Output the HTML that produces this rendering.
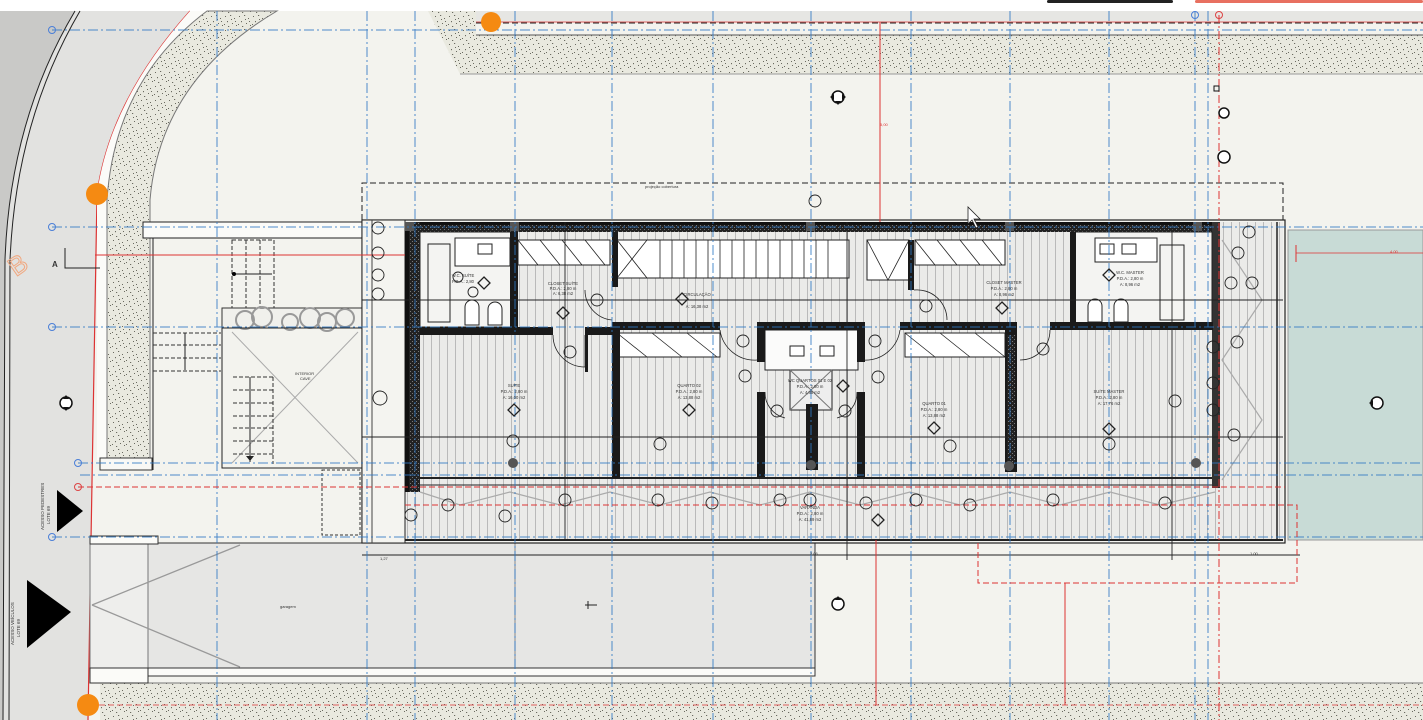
<!DOCTYPE html>
<html><head><meta charset="utf-8"><style>
html,body{margin:0;padding:0;background:#f3f3ee;overflow:hidden}
svg{display:block}
text{font-family:"Liberation Sans",sans-serif}
</style></head><body>
<svg width="1423" height="720" viewBox="0 0 1423 720" xmlns="http://www.w3.org/2000/svg">
<defs>
<pattern id="st" width="14" height="14" patternUnits="userSpaceOnUse">
<rect width="14" height="14" fill="#e9e9df"/>
<g fill="#6a6a60"><rect x="1" y="2" width="1" height="1"/><rect x="6" y="1" width="1.2" height="1"/><rect x="10" y="4" width="1" height="1"/><rect x="3" y="7" width="1" height="1.2"/><rect x="8" y="9" width="1" height="1"/><rect x="12" y="11" width="1" height="1"/><rect x="4" y="12" width="1.2" height="1"/><rect x="0" y="10" width="1" height="1"/><rect x="11" y="7" width="1" height="1"/><rect x="7" y="5" width="1" height="1"/></g>
</pattern>
<pattern id="fl" width="8" height="10" patternUnits="userSpaceOnUse">
<rect width="8" height="10" fill="#ebebe9"/><rect x="7" width="1" height="10" fill="#bababa"/>
</pattern>
<pattern id="hw" width="4" height="4" patternUnits="userSpaceOnUse">
<rect width="4" height="4" fill="#222"/><rect x="0" y="1" width="1" height="1" fill="#777"/><rect x="2" y="3" width="1" height="1" fill="#777"/>
</pattern>
</defs>

<rect x="0" y="0" width="1423" height="11" fill="#fff"/>
<rect x="1047" y="0" width="126" height="3" rx="1.5" fill="#222"/>
<rect x="1195" y="0" width="228" height="3" rx="1.5" fill="#e87060"/>
<rect x="476" y="11" width="947" height="11" fill="#e6e6e3"/>

<path d="M0,11 L190,11 Q110,100 97,194 L91,540 L88,720 L0,720 Z" fill="#e2e2e0"/>
<path d="M0,11 L75,11 Q10,120 5,260 L3,720 L0,720 Z" fill="#c9c9c7"/>
<path d="M75,11 Q10,120 5,260 L3,720" fill="none" stroke="#222" stroke-width="1"/>
<path d="M80,11 Q16,120 10,260 L9,720" fill="none" stroke="#222" stroke-width="1"/>
<path d="M190,11 Q110,100 97,194 L91,540 L88,720" fill="none" stroke="#d33" stroke-width="1.2"/>
<path d="M190,11 L207,11 Q115,80 107,200 L107,460 L97,460 L97,194 Q110,100 190,11 Z" fill="#fbfbf8"/>
<path d="M207,11 L277,11 Q160,80 150,200 L150,462 L107,462 L107,200 Q115,80 207,11 Z" fill="url(#st)" stroke="#777" stroke-width="1"/>
<rect x="100" y="458" width="52" height="12" fill="#f8f8f5" stroke="#333"/>
<path d="M428,11 L1423,11 L1423,74 L460,74 Z" fill="url(#st)"/>
<rect x="476" y="11" width="947" height="24" fill="#f3f3ee"/>
<rect x="476" y="11" width="947" height="11" fill="#e6e6e3"/>
<line x1="476" y1="35" x2="1423" y2="35" stroke="#555"/>
<line x1="460" y1="74" x2="1423" y2="74" stroke="#999"/>
<line x1="476" y1="23" x2="1423" y2="23" stroke="#222" stroke-dasharray="6 3"/>
<line x1="476" y1="22" x2="1423" y2="22" stroke="#d33" stroke-width="0.8"/>
<rect x="100" y="683" width="1323" height="37" fill="url(#st)"/>
<line x1="100" y1="683" x2="1423" y2="683" stroke="#777"/>
<line x1="90" y1="705" x2="1423" y2="705" stroke="#d33" stroke-dasharray="6 3" stroke-width="0.8"/>

<rect x="90" y="543" width="725" height="125" fill="#e6e6e4" stroke="#333"/>
<rect x="90" y="543" width="58" height="125" fill="#eeeeec" stroke="#777"/>
<rect x="90" y="668" width="58" height="15" fill="#fbfbf8" stroke="#333"/>
<rect x="148" y="668" width="667" height="8" fill="#fbfbf8" stroke="#333"/>
<path d="M92,605 L240,545 M92,605 L240,667" stroke="#999" stroke-width="1.3"/>
<line x1="515" y1="543" x2="515" y2="668" stroke="#888"/>
<rect x="90" y="536" width="68" height="8" fill="#fbfbf8" stroke="#333"/>
<text x="280" y="608" font-size="4" fill="#333">garagem</text>
<path d="M585,605 h12 M588,601 v8" stroke="#222"/>

<rect x="143" y="222" width="220" height="16" fill="#fbfbf8" stroke="#222"/>
<line x1="153" y1="238" x2="153" y2="470" stroke="#222"/>
<rect x="232" y="240" width="42" height="68" fill="none" stroke="#333" stroke-dasharray="4 2"/>
<path d="M246,240 v68 M260,240 v68" stroke="#333" stroke-dasharray="4 2"/>
<path d="M232,274 h40" stroke="#222"/><circle cx="234" cy="274" r="2"/>
<rect x="222" y="308" width="141" height="20" fill="#f0f0ec" stroke="#333"/>
<g fill="none" stroke="#999" stroke-width="2">
<circle cx="245" cy="320" r="9"/><circle cx="262" cy="317" r="10"/><circle cx="290" cy="322" r="8"/><circle cx="310" cy="318" r="10"/><circle cx="327" cy="322" r="9"/><circle cx="345" cy="318" r="9"/></g>
<rect x="222" y="328" width="141" height="140" fill="none" stroke="#222"/>
<path d="M232,332 L358,463 M358,332 L232,463" stroke="#aaa"/>
<g stroke="#333" stroke-dasharray="4 2" fill="none"><path d="M233,377 h40 M233,390 h40 M233,403 h40 M233,416 h40 M233,428 h40 M233,441 h40 M233,454 h40"/><path d="M273,377 v87"/></g>
<path d="M250,377 v85" stroke="#222"/><path d="M246,456 h8 l-4,5z" fill="#222"/>
<g stroke="#333" stroke-dasharray="4 2"><path d="M153,333 h68 M153,345 h68 M153,358 h68 M153,371 h68"/></g>
<path d="M185,333 v37" stroke="#222"/>
<text x="295" y="375" font-size="4" fill="#333">INTERIOR</text><text x="300" y="380" font-size="4" fill="#333">CAVE</text>
<rect x="322" y="470" width="38" height="65" fill="none" stroke="#333" stroke-dasharray="3 2"/>

<path d="M362,220 V183 H1283 V228" fill="none" stroke="#222" stroke-dasharray="6 3"/>
<text x="645" y="188" font-size="4" fill="#333">projeção cobertura</text>

<rect x="1288" y="230" width="135" height="310" fill="#c8dbd6" stroke="#999"/>
<line x1="1296" y1="253" x2="1423" y2="253" stroke="#d33" stroke-width="0.8"/>
<line x1="1296" y1="245" x2="1296" y2="262" stroke="#d33"/>
<text x="1390" y="253" font-size="4" fill="#d33">4.00</text>

<rect x="362" y="220" width="923" height="323" fill="#f4f4f0" stroke="#222" stroke-width="1.2"/>
<rect x="405" y="222" width="878" height="318" fill="url(#fl)"/>
<rect x="1220" y="222" width="63" height="318" fill="url(#fl)"/>
<line x1="1277" y1="222" x2="1277" y2="540" stroke="#222" stroke-width="1.5"/>
<rect x="362" y="220" width="43" height="323" fill="#f4f4f0" stroke="#222"/>
<line x1="372" y1="220" x2="372" y2="543" stroke="#444"/>
<line x1="362" y1="300" x2="405" y2="300" stroke="#222"/>
<line x1="362" y1="437" x2="405" y2="437" stroke="#222"/>
<line x1="405" y1="540" x2="1283" y2="540" stroke="#222" stroke-width="2"/>
<line x1="405" y1="478" x2="1220" y2="478" stroke="#222" stroke-width="2"/>
<line x1="420" y1="485" x2="1220" y2="485" stroke="#222"/>
<path d="M420,492 L460,505 L510,492 L560,505 L610,492 L660,505 L710,492 L760,505 L810,492 L860,505 L910,492 L960,505 L1010,492 L1060,505 L1110,492 L1160,505 L1215,492" fill="none" stroke="#aaa" stroke-width="1.2"/>
<path d="M1222,240 L1262,300 L1222,360 L1262,420 L1222,480" fill="none" stroke="#aaa" stroke-width="1.2"/>

<rect x="405" y="222" width="815" height="10" fill="url(#hw)"/>
<rect x="405" y="222" width="815" height="3" fill="#111"/>
<rect x="405" y="222" width="15" height="270" fill="url(#hw)"/>
<rect x="405" y="222" width="4" height="270" fill="#111"/>
<rect x="1212" y="222" width="8" height="266" fill="#333"/>
<g fill="#555"><rect x="405" y="222" width="9" height="9"/><rect x="510" y="222" width="9" height="9"/><rect x="806" y="222" width="9" height="9"/><rect x="1005" y="222" width="9" height="9"/><rect x="1193" y="222" width="9" height="9"/></g>

<rect x="420" y="232" width="92" height="95" fill="#f4f4f2" stroke="#222"/>
<rect x="1075" y="232" width="137" height="92" fill="#f4f4f2" stroke="#222"/>
<rect x="765" y="330" width="93" height="40" fill="#fbfbfa" stroke="#222"/>
<rect x="455" y="238" width="55" height="28" fill="#fff" stroke="#222"/>
<rect x="1095" y="238" width="62" height="24" fill="#fff" stroke="#222"/>
<rect x="478" y="244" width="14" height="10" fill="#fff" stroke="#222"/><rect x="1100" y="244" width="14" height="10" fill="#fff" stroke="#222"/><rect x="1122" y="244" width="14" height="10" fill="#fff" stroke="#222"/>
<rect x="790" y="346" width="14" height="10" fill="#fff" stroke="#222"/><rect x="820" y="346" width="14" height="10" fill="#fff" stroke="#222"/>
<rect x="790" y="370" width="42" height="40" fill="#eee" stroke="#222"/><path d="M790,370 L832,410 M832,370 L790,410" stroke="#777"/>
<path d="M465,325 v-18 a7,7 0 0 1 14,0 v18z M488,325 v-16 a7,7 0 0 1 14,0 v16z" fill="#fff" stroke="#222"/>
<path d="M1088,322 v-16 a7,7 0 0 1 14,0 v16z M1114,322 v-16 a7,7 0 0 1 14,0 v16z" fill="#fff" stroke="#222"/>
<rect x="428" y="244" width="22" height="78" fill="none" stroke="#222"/>
<rect x="1160" y="245" width="24" height="75" fill="#f4f4f2" stroke="#222"/>

<g fill="#fff" stroke="#222">
<rect x="518" y="240" width="92" height="25"/><rect x="617" y="240" width="232" height="38"/><rect x="867" y="240" width="42" height="40"/><rect x="915" y="240" width="90" height="25"/>
<rect x="617" y="333" width="103" height="24"/><rect x="905" y="333" width="100" height="24"/>
</g>
<g stroke="#222" fill="none" stroke-width="0.8">
<path d="M518,240 l20,25 M540,240 l20,25 M562,240 l20,25 M585,240 l20,25"/>
<path d="M617,240 l30,38 M647,240 l-30,38 M660,240 v38 M672,240 v38 M684,240 v38 M696,240 v38 M708,240 v38 M720,240 v38 M732,240 v38 M744,240 v38 M756,240 v38 M768,240 v38 M780,240 v38 M792,240 v38 M804,240 v38 M816,240 v38 M828,240 v38"/>
<path d="M867,240 l21,40 l21,-40"/>
<path d="M915,240 l20,25 M937,240 l20,25 M960,240 l20,25 M982,240 l20,25"/>
<path d="M617,333 l30,24 M652,333 l30,24 M687,333 l30,24 M905,333 l30,24 M940,333 l30,24 M975,333 l30,24"/>
</g>

<g fill="#1a1a1a">
<rect x="420" y="327" width="133" height="8"/><rect x="585" y="327" width="35" height="8"/><rect x="585" y="327" width="3" height="45"/>
<rect x="510" y="232" width="8" height="95"/>
<rect x="612" y="325" width="8" height="153"/><rect x="612" y="232" width="6" height="55"/>
<rect x="612" y="322" width="108" height="8"/>
<rect x="757" y="322" width="108" height="8"/>
<rect x="757" y="322" width="8" height="40"/><rect x="857" y="322" width="8" height="40"/>
<rect x="757" y="392" width="8" height="85"/><rect x="857" y="392" width="8" height="85"/>
<rect x="806" y="404" width="12" height="66"/>
<rect x="900" y="322" width="117" height="8"/>
<rect x="1005" y="322" width="12" height="150"/>
<rect x="1050" y="322" width="163" height="8"/>
<rect x="1070" y="232" width="6" height="95"/>
<rect x="908" y="240" width="6" height="50"/>
</g>
<rect x="1007" y="335" width="8" height="130" fill="url(#hw)"/>

<g fill="none" stroke="#222" stroke-width="0.8">
<path d="M553,335 a32,32 0 0 0 32,32 v-32"/>
<path d="M720,330 a35,35 0 0 0 37,30"/><path d="M900,330 a35,35 0 0 1 -37,30"/>
<path d="M585,290 a30,30 0 0 0 27,30"/><path d="M914,290 a30,30 0 0 1 33,30"/>
<path d="M765,392 a26,26 0 0 0 20,26"/><path d="M857,392 a26,26 0 0 1 -20,26"/>
<path d="M1050,330 a30,30 0 0 1 -30,30"/>
</g>

<g stroke="#222" stroke-width="0.9">
<line x1="362" y1="300" x2="1283" y2="300"/>
<line x1="362" y1="437" x2="1283" y2="437"/>
<line x1="362" y1="555" x2="1300" y2="555"/>
</g>
<g stroke="#222" stroke-width="0.9"><line x1="847" y1="222" x2="847" y2="560"/><line x1="1172" y1="222" x2="1172" y2="560"/><line x1="565" y1="222" x2="565" y2="540"/></g>

<g stroke="#2f78c4" stroke-width="1" stroke-dasharray="10 3 2 3" fill="none" opacity="0.85">
<path d="M52,30 H1423 M52,227 H1423 M52,327 H1423 M78,463 H1423 M52,537 H1423 M80,475 H1423"/>
<path d="M217,11 V720 M367,11 V720 M415,11 V720 M515,11 V720 M612,11 V720 M713,11 V720 M811,11 V720 M911,11 V720 M1010,11 V720 M1109,11 V720 M1195,11 V720 M1208,11 V720"/>
</g>
<g fill="none" stroke="#4a7fd8"><circle cx="52" cy="30" r="3.5"/><circle cx="52" cy="227" r="3.5"/><circle cx="52" cy="327" r="3.5"/><circle cx="78" cy="463" r="3.5"/><circle cx="52" cy="537" r="3.5"/><circle cx="1195" cy="15" r="3.5"/></g>
<circle cx="1219" cy="15" r="3.5" fill="none" stroke="#d44"/>

<g stroke="#d33" stroke-width="1" fill="none">
<line x1="880" y1="22" x2="880" y2="222"/>
<line x1="95" y1="255" x2="405" y2="255"/>
<path d="M1219,15 V720" stroke-dasharray="8 3 2 3"/>
<path d="M78,487 H1285" stroke-dasharray="6 3"/>
<path d="M405,505 H1297 V583 H978 V540" stroke-dasharray="6 3"/>
<line x1="1065" y1="583" x2="1065" y2="705"/>
<line x1="876" y1="540" x2="876" y2="705"/>
</g>
<circle cx="78" cy="487" r="3.5" fill="none" stroke="#d44"/>

<text x="52" y="267" font-size="8" font-weight="bold" fill="#333">A</text>
<path d="M65,248 v20 h35" fill="none" stroke="#222"/>
<text x="8" y="272" font-size="26" fill="none" stroke="#f0a880" stroke-width="1" transform="rotate(-35 20 262)">B</text>

<path d="M57,490 L83,511 L57,532 Z" fill="#000"/>
<path d="M27,580 L71,612 L27,648 Z" fill="#000"/>
<text transform="translate(44,530) rotate(-90)" font-size="4.5" fill="#333">ACESSO PEDESTRES</text>
<text transform="translate(50,524) rotate(-90)" font-size="4.5" fill="#333">LOTE 69</text>
<text transform="translate(14,645) rotate(-90)" font-size="4.5" fill="#333">ACESSO VEÍCULOS</text>
<text transform="translate(20,637) rotate(-90)" font-size="4.5" fill="#333">LOTE 69</text>

<circle cx="491" cy="22" r="10" fill="#f58a12"/>
<circle cx="97" cy="194" r="11" fill="#f58a12"/>
<circle cx="88" cy="705" r="11" fill="#f58a12"/>

<g fill="#fff" stroke="#111" stroke-width="1.5">
<circle cx="838" cy="97" r="6"/><circle cx="66" cy="403" r="6"/><circle cx="838" cy="604" r="6"/><circle cx="1377" cy="403" r="6"/><circle cx="1224" cy="113" r="5"/><circle cx="1224" cy="157" r="6"/>
</g>
<g fill="#111"><path d="M830,97 l4,-3 v6z M846,97 l-4,-3 v6z M838,105 l-3,-4 h6z"/><path d="M66,395 l-3,4 h6z M66,411 l-3,-4 h6z"/><path d="M1369,403 l4,-3 v6z"/><path d="M838,596 l-3,4 h6z"/></g>
<rect x="1214" y="86" width="5" height="5" fill="none" stroke="#111"/>

<g fill="none" stroke="#222" stroke-width="0.9">
<circle cx="378" cy="228" r="6"/><circle cx="378" cy="253" r="6"/><circle cx="378" cy="275" r="6"/><circle cx="378" cy="294" r="6"/><circle cx="380" cy="398" r="7"/><circle cx="411" cy="515" r="6"/>
<circle cx="815" cy="201" r="6"/><circle cx="1249" cy="232" r="6"/><circle cx="1238" cy="253" r="6"/><circle cx="1231" cy="283" r="6"/><circle cx="1252" cy="283" r="6"/><circle cx="1237" cy="342" r="6"/><circle cx="1234" cy="435" r="6"/>
<circle cx="448" cy="505" r="6"/><circle cx="505" cy="516" r="6"/><circle cx="565" cy="500" r="6"/><circle cx="658" cy="500" r="6"/><circle cx="712" cy="503" r="6"/><circle cx="780" cy="500" r="6"/><circle cx="810" cy="500" r="6"/><circle cx="866" cy="503" r="6"/><circle cx="916" cy="500" r="6"/><circle cx="970" cy="505" r="6"/><circle cx="1053" cy="500" r="6"/><circle cx="1165" cy="503" r="6"/>
<circle cx="570" cy="352" r="6"/><circle cx="513" cy="441" r="6"/><circle cx="660" cy="444" r="6"/><circle cx="743" cy="341" r="6"/><circle cx="745" cy="376" r="6"/><circle cx="875" cy="341" r="6"/><circle cx="878" cy="377" r="6"/><circle cx="777" cy="411" r="6"/><circle cx="845" cy="411" r="6"/><circle cx="950" cy="446" r="6"/><circle cx="1043" cy="349" r="6"/><circle cx="1175" cy="401" r="6"/><circle cx="1109" cy="444" r="6"/><circle cx="1213" cy="347" r="6"/><circle cx="1213" cy="383" r="6"/><circle cx="1213" cy="410" r="6"/>
<circle cx="597" cy="300" r="6"/><circle cx="926" cy="306" r="6"/><circle cx="473" cy="292" r="5"/><circle cx="458" cy="277" r="5"/>
</g>
<g fill="#555"><circle cx="513" cy="463" r="5"/><circle cx="1196" cy="463" r="5"/><circle cx="1009" cy="466" r="5"/><circle cx="811" cy="465" r="5"/></g>
<g fill="none" stroke="#222" stroke-width="1.3">
<path d="M563,307 l6,6 -6,6 -6,-6z M484,277 l6,6 -6,6 -6,-6z M514,404 l6,6 -6,6 -6,-6z M689,404 l6,6 -6,6 -6,-6z M1002,302 l6,6 -6,6 -6,-6z M934,422 l6,6 -6,6 -6,-6z M1109,423 l6,6 -6,6 -6,-6z M1109,269 l6,6 -6,6 -6,-6z M878,514 l6,6 -6,6 -6,-6z M682,293 l6,6 -6,6 -6,-6z M843,380 l6,6 -6,6 -6,-6z"/>
</g>
<g font-size="4.2" fill="#333" text-anchor="middle">
<text x="563" y="285">CLOSET SUÍTE</text><text x="563" y="290">P.D.A.: 2,80 m</text><text x="563" y="295">A: 6,38 m2</text>
<text x="697" y="296">CIRCULAÇÃO</text><text x="697" y="308">A: 16,38 m2</text>
<text x="514" y="387">SUÍTE</text><text x="514" y="393">P.D.A.: 2,80 m</text><text x="514" y="399">A: 16,00 m2</text>
<text x="689" y="387">QUARTO 02</text><text x="689" y="393">P.D.A.: 2,80 m</text><text x="689" y="399">A: 13,88 m2</text>
<text x="810" y="382">WC QUARTOS 01 E 02</text><text x="810" y="388">P.D.A.: 2,80 m</text><text x="810" y="394">A: 4,85 m2</text>
<text x="934" y="405">QUARTO 01</text><text x="934" y="411">P.D.A.: 2,80 m</text><text x="934" y="417">A: 13,88 m2</text>
<text x="1109" y="393">SUÍTE MASTER</text><text x="1109" y="399">P.D.A.: 2,80 m</text><text x="1109" y="405">A: 17,76 m2</text>
<text x="1004" y="284">CLOSET MASTER</text><text x="1004" y="290">P.D.A.: 2,80 m</text><text x="1004" y="296">A: 8,96 m2</text>
<text x="1130" y="274">W.C. MASTER</text><text x="1130" y="280">P.D.A.: 2,80 m</text><text x="1130" y="286">A: 8,96 m2</text>
<text x="463" y="277">W.C. SUÍTE</text><text x="463" y="283">P.D.A.: 2,80</text>
<text x="810" y="509">VARANDA</text><text x="810" y="515">P.D.A.: 2,80 m</text><text x="810" y="521">A: 41,89 m2</text>
</g>
<g font-size="4" fill="#333"><text x="380" y="560">1,27</text><text x="810" y="555">2,06</text><text x="1250" y="555">1,00</text><text x="880" y="126" fill="#d33">5,00</text></g>
<path d="M968,207 L968,224 L972,220 L976,228 L978,227 L974,219 L980,219 Z" fill="#fff" stroke="#222" stroke-width="0.8"/>
</svg>
</body></html>
